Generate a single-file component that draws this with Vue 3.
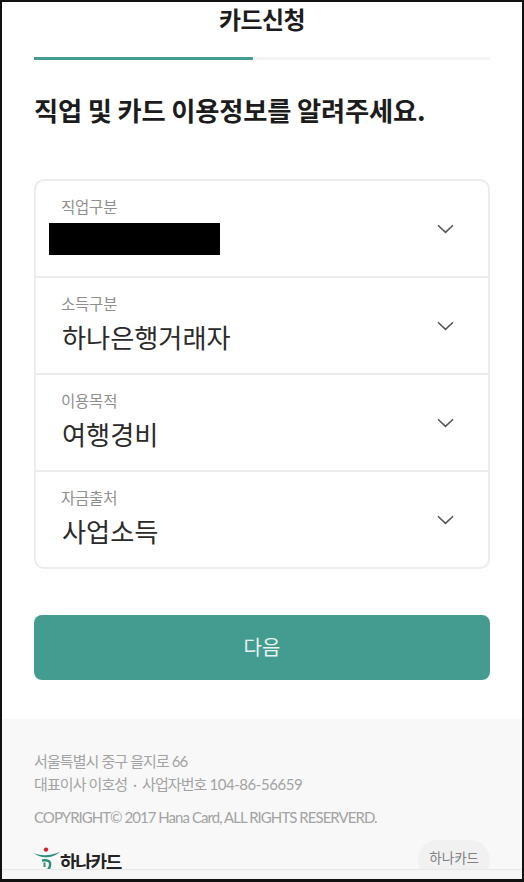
<script setup>
const rows = [
  { label: '직업구분', value: '', hidden: true },
  { label: '소득구분', value: '하나은행거래자' },
  { label: '이용목적', value: '여행경비' },
  { label: '자금출처', value: '사업소득' },
]
</script>

<template>
  <div class="frame">
    <div class="page">
      <h1 class="title">카드신청</h1>
      <div class="progress"><div class="progress-fill"></div></div>
      <h2 class="heading">직업 및 카드 이용정보를 알려주세요.</h2>
      <div class="card">
        <div v-for="row in rows" :key="row.label" class="row">
          <div class="row-text">
            <div class="label">{{ row.label }}</div>
            <div v-if="row.hidden" class="redact"></div>
            <div v-else class="value">{{ row.value }}</div>
          </div>
          <svg class="chev" width="17" height="10" viewBox="0 0 17 10">
            <path d="M1 1.2 8.5 8.4 16 1.2" fill="none" stroke="#555" stroke-width="1.5" />
          </svg>
        </div>
      </div>
      <button class="next">다음</button>
      <footer class="footer">
        <p class="line first">서울특별시 중구 을지로 66</p>
        <p class="line">대표이사 이호성 &nbsp;·&nbsp; 사업자번호 <span class="digits">104-86-56659</span></p>
        <p class="line copy">COPYRIGHT© 2017 Hana Card, ALL RIGHTS RESERVERD.</p>
        <div class="brand">
          <div class="logo">
            <svg width="28" height="24" viewBox="0 0 28 24">
              <circle cx="13" cy="2.600" r="2.200" fill="#d1232f" />
              <path d="M0 5.500C6 9 18 9.500 27 4.500C21 11.500 7 12.500 0 5.500Z" fill="#2f8f7c" />
              <path d="M9 13.500C13 13 16.500 13.500 17 16C17.500 19 16 22 14.500 23.500" fill="none" stroke="#2f8f7c" stroke-width="2.400" />
              <path d="M11.500 15.500V20" fill="none" stroke="#2f8f7c" stroke-width="2" />
            </svg>
            <span class="logo-text">하나카드</span>
          </div>
          <span class="pill">하나카드</span>
        </div>
      </footer>
      <div class="bottom-bar"></div>
    </div>
  </div>
</template>

<style>
html, body { margin: 0; background: #fff; }
</style>

<style scoped>
.frame {
  box-sizing: border-box;
  width: 524px;
  height: 882px;
  border: 2px solid #111;
  border-bottom-width: 3px;
  overflow: hidden;
  font-family: "Noto Sans CJK KR", "Noto Sans", sans-serif;
  background: #fff;
}
.page {
  display: flex;
  flex-direction: column;
  height: 100%;
}
.title {
  margin: 1px 0 0;
  height: 35px;
  line-height: 32px;
  font-size: 24px;
  font-weight: 700;
  letter-spacing: -0.6px;
  text-align: center;
  color: #1c1c1c;
}
.progress {
  margin: 19px 32px 0;
  height: 3px;
  background: #f5f5f5;
}
.progress-fill {
  width: 48%;
  height: 100%;
  background: #449c90;
}
.heading {
  margin: 30px 32px 0;
  height: 40px;
  line-height: 40px;
  font-size: 26.300px;
  font-weight: 700;
  letter-spacing: -0.2px;
  color: #1c1c1c;
  white-space: nowrap;
}
.card {
  margin: 49px 32px 0;
  border: 2px solid #ececec;
  border-radius: 10px;
  display: flex;
  flex-direction: column;
}
.row {
  height: 95px;
  display: flex;
  justify-content: space-between;
  border-bottom: 2px solid #ececec;
  box-sizing: content-box;
}
.row:last-child { border-bottom: 0; }
.row-text { padding: 14px 0 0 26px; }
.label {
  margin-left: -1px;
  font-size: 15.500px;
  line-height: 22px;
  letter-spacing: -0.2px;
  color: #8f8f8f;
}
.value {
  margin-top: 5px;
  font-size: 26.200px;
  line-height: 36px;
  color: #2a2a2a;
}
.redact {
  width: 171px;
  height: 32px;
  margin: 6px 0 0 -13px;
  background: #000;
}
.chev {
  margin: 43px 34px 0 0;
}
.next {
  margin: 46px 32px 0;
  height: 65px;
  border: 0;
  border-radius: 8px;
  background: #449c90;
  color: #e8f3f1;
  font-family: inherit;
  font-size: 20px;
  padding: 0 0 3px;
}
.footer {
  margin-top: 39px;
  flex: 1;
  background: #f8f8f8;
  padding: 0 32px;
  color: #a3a3a3;
  font-family: Lato, "Noto Sans CJK KR", sans-serif;
  font-size: 15px;
  overflow: hidden;
}
.line {
  margin: 0;
  height: 23px;
  line-height: 23px;
  white-space: nowrap;
  letter-spacing: -0.9px;
}
.digits { letter-spacing: -0.45px; }
.first { margin-top: 31px; letter-spacing: -0.9px; }
.copy { margin-top: 10px; letter-spacing: -0.95px; }
.brand {
  margin-top: 10px;
  display: flex;
  justify-content: space-between;
  align-items: flex-start;
}
.logo {
  display: flex;
  align-items: center;
  margin-top: 5px;
  margin-left: -1px;
}
.logo-text {
  font-family: "Noto Sans CJK KR", sans-serif;
  font-size: 18px;
  font-weight: 700;
  color: #222;
  letter-spacing: -1.300px;
  margin-left: -1px;
  line-height: 24px;
  padding-top: 5px;
}
.pill {
  font-family: "Noto Sans CJK KR", sans-serif;
  background: #f1f1f1;
  color: #808080;
  font-size: 13.500px;
  height: 40px;
  line-height: 34px;
  padding: 0 11px;
  margin-top: 1px;
  border-radius: 20px;
}
.bottom-bar {
  height: 9px;
  background: #f5f5f5;
  border-top: 1px solid #e8e8e8;
  margin-top: -10px;
  position: relative;
}
</style>
